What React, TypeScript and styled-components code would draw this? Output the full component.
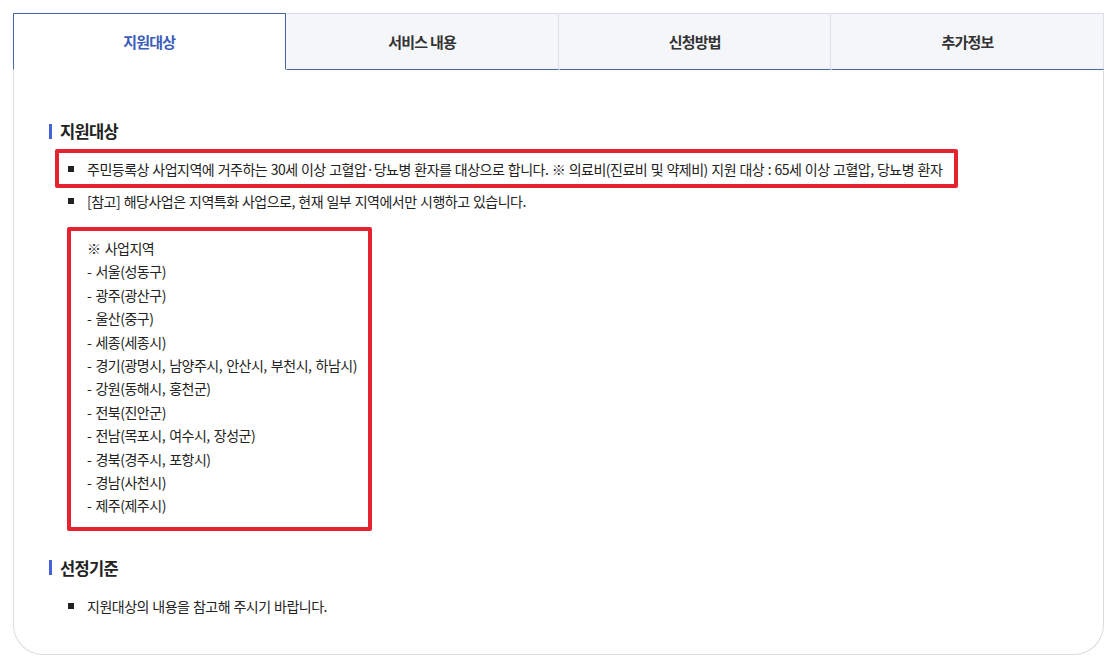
import React from 'react'
import styled, { createGlobalStyle } from 'styled-components'

const GlobalStyle = createGlobalStyle`
    html, body {
        margin: 0;
        padding: 0;
        background: #fff;
    }
    body {
        font-family: "Noto Sans CJK KR", "Noto Sans", sans-serif;
        color: #222;
    }
`

const Page = styled.div`
    padding: 13px 13px 12px 13px;
    width: 1091px;
`

const Tabs = styled.ul`
    display: grid;
    grid-template-columns: repeat(4, 1fr);
    margin: 0;
    padding: 0;
    list-style: none;
`

const Tab = styled.li<{ $active?: boolean }>`
    height: 57px;
    display: flex;
    align-items: center;
    justify-content: center;
    font-size: 15px;
    font-weight: 700;
    letter-spacing: -0.8px;
    box-sizing: border-box;
    color: ${p => (p.$active ? '#3b5cb8' : '#333')};
    background: ${p => (p.$active ? '#fff' : '#f5f6fa')};
    border-top: 1px solid ${p => (p.$active ? '#4a67a3' : '#dcdfe6')};
    border-bottom: 1px solid ${p => (p.$active ? 'transparent' : '#4a67a3')};
    border-left: 1px solid ${p => (p.$active ? '#4a67a3' : 'transparent')};
    border-right: 1px solid ${p => (p.$active ? '#4a67a3' : '#dcdfe6')};
    &:first-child {
        border-left-color: #4a67a3;
    }
`

const Card = styled.div`
    border: 1px solid #dcdcdc;
    border-top: none;
    border-radius: 0 0 30px 30px;
    padding: 49px 35px 36px 35px;
`

const Section = styled.section`
    & + & {
        margin-top: 25px;
    }
`

const Heading = styled.h3`
    display: flex;
    align-items: center;
    gap: 8px;
    margin: 0;
    height: 24px;
    font-size: 16.5px;
    font-weight: 700;
    letter-spacing: -0.7px;
    color: #222;
    &::before {
        content: '';
        width: 3px;
        height: 15px;
        background: #4463d8;
    }
`

const List = styled.ul`
    margin: 14px 0 0 0;
    padding: 0 0 0 19px;
    list-style: none;
`

const Item = styled.li<{ $marked?: boolean }>`
    display: flex;
    align-items: center;
    gap: 13px;
    height: 24px;
    font-size: 14px;
    letter-spacing: -0.5px;
    word-spacing: 0.8px;
    color: #222;
    ${p =>
        p.$marked &&
        `
        height: 31px;
        width: fit-content;
        margin: -8px 0 1px -13px;
        padding: 0 12px 0 9px;
        border: 4px solid #e5222f;
        border-radius: 2px;
    `}
`

const Bullet = styled.span`
    flex: none;
    width: 6px;
    height: 6px;
    background: #222;
`

const RegionBox = styled.div`
    width: fit-content;
    margin: 14px 0 0 18px;
    padding: 6px 11px 9px 16px;
    border: 4px solid #e5222f;
    border-radius: 2px;
`

const RegionLine = styled.p`
    margin: 0;
    height: 23.4px;
    line-height: 23.4px;
    font-size: 14px;
    letter-spacing: -0.5px;
    word-spacing: 1.5px;
    color: #222;
`

const tabs = ['지원대상', '서비스 내용', '신청방법', '추가정보']

const regions = [
    '※ 사업지역',
    '- 서울(성동구)',
    '- 광주(광산구)',
    '- 울산(중구)',
    '- 세종(세종시)',
    '- 경기(광명시, 남양주시, 안산시, 부천시, 하남시)',
    '- 강원(동해시, 홍천군)',
    '- 전북(진안군)',
    '- 전남(목포시, 여수시, 장성군)',
    '- 경북(경주시, 포항시)',
    '- 경남(사천시)',
    '- 제주(제주시)',
]

export default function App() {
    return (
        <Page>
            <GlobalStyle />
            <Tabs>
                {tabs.map((t, i) => (
                    <Tab key={t} $active={i === 0}>{t}</Tab>
                ))}
            </Tabs>
            <Card>
                <Section>
                    <Heading>지원대상</Heading>
                    <List>
                        <Item $marked>
                            <Bullet />
                            주민등록상 사업지역에 거주하는 30세 이상 고혈압·당뇨병 환자를 대상으로 합니다. ※ 의료비(진료비 및 약제비) 지원 대상 : 65세 이상 고혈압, 당뇨병 환자
                        </Item>
                        <Item>
                            <Bullet />
                            [참고] 해당사업은 지역특화 사업으로, 현재 일부 지역에서만 시행하고 있습니다.
                        </Item>
                    </List>
                    <RegionBox>
                        {regions.map(r => (
                            <RegionLine key={r}>{r}</RegionLine>
                        ))}
                    </RegionBox>
                </Section>
                <Section>
                    <Heading>선정기준</Heading>
                    <List>
                        <Item>
                            <Bullet />
                            지원대상의 내용을 참고해 주시기 바랍니다.
                        </Item>
                    </List>
                </Section>
            </Card>
        </Page>
    )
}
